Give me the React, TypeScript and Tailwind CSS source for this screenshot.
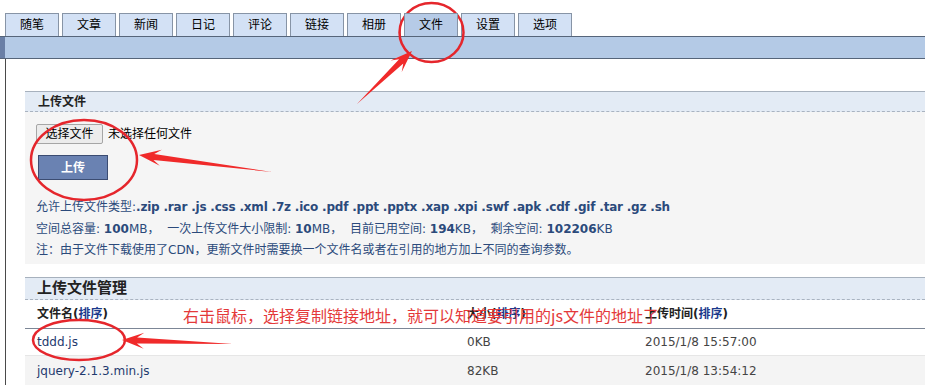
import React from "react";

const tabs = ["随笔", "文章", "新闻", "日记", "评论", "链接", "相册", "文件", "设置", "选项"];

const font = { fontFamily: '"DejaVu Sans", "Noto Sans CJK SC", sans-serif' };

// arrow outline from tail to tip, thin at the tail
function arrow(tx: number, ty: number, px: number, py: number) {
  const len = Math.hypot(px - tx, py - ty);
  const dx = (px - tx) / len;
  const dy = (py - ty) / len;
  const nx = -dy;
  const ny = dx;
  const neck = [px - 15 * dx, py - 15 * dy];
  const barb = [px - 22 * dx, py - 22 * dy];
  const pts = [
    [tx, ty],
    [neck[0] + 3 * nx, neck[1] + 3 * ny],
    [barb[0] + 8 * nx, barb[1] + 8 * ny],
    [px, py],
    [barb[0] - 8 * nx, barb[1] - 8 * ny],
    [neck[0] - 3 * nx, neck[1] - 3 * ny],
  ];
  return pts.map((p) => p.join(",")).join(" ");
}

function Sort() {
  return (
    <>
      (<span className="text-[#1c3a8c]">排序</span>)
    </>
  );
}

export default function App() {
  return (
    <div className="relative w-[925px] h-[385px] overflow-hidden bg-white text-[12px]" style={font}>
      {/* tabs */}
      <div className="flex gap-[3px] pl-[5px] pt-[13px]">
        {tabs.map((t) => (
          <div
            key={t}
            className={
              t === "文件"
                ? "w-[54px] h-[23px] flex items-center justify-center border border-b-0 border-[#8794a6] bg-[#b6cbe7] text-black relative z-10 -mb-px"
                : "w-[54px] h-[23px] flex items-center justify-center border border-b-0 border-[#8794a6] bg-[#d3e1f5] text-black"
            }
          >
            {t}
          </div>
        ))}
      </div>

      {/* blue bar */}
      <div className="flex h-[23px] border-y border-[#56657a] bg-[#b4cae6]">
        <div className="w-[5px] bg-[#6a7fa6]" />
      </div>

      {/* body */}
      <div className="ml-[5px] border-l border-[#4a4a4a] pl-[19px] pt-[32px] h-[400px]">
        {/* upload section */}
        <div className="border-t border-[#a7b1bd]">
          <div className="h-[20px] flex items-center pl-[13px] bg-[#e3ebf5] border-b border-dashed border-[#a9b3c0] font-bold text-[#222]">
            上传文件
          </div>
          <div className="bg-[#f5f5f5] h-[152px] pl-[11px] pt-[12px] text-[#2b4a7b]">
            <div className="flex items-center gap-[5px] text-black">
              <div className="w-[67px] h-[20px] flex items-center justify-center border border-[#a6a6a6] rounded-[2px] bg-[#ececec]">
                选择文件
              </div>
              <span>未选择任何文件</span>
            </div>
            <div className="mt-[11px] ml-[2px] w-[70px] h-[25px] flex items-center justify-center bg-[#6a82b2] border border-[#3b4c72] text-white font-bold">
              上传
            </div>
            <div className="mt-[17px] leading-[21.5px]">
              <div>
                允许上传文件类型:<b className="tracking-[-0.2px]">.zip .rar .js .css .xml .7z .ico .pdf .ppt .pptx .xap .xpi .swf .apk .cdf .gif .tar .gz .sh</b>
              </div>
              <div className="whitespace-pre">
                空间总容量: <b>100</b>MB，  一次上传文件大小限制: <b>10</b>MB，  目前已用空间: <b>194</b>KB，  剩余空间: <b>102206</b>KB
              </div>
              <div>注：由于文件下载使用了CDN，更新文件时需要换一个文件名或者在引用的地方加上不同的查询参数。</div>
            </div>
          </div>
        </div>

        {/* manage section */}
        <div className="mt-[13px] border-t border-[#a7b1bd]">
          <div className="h-[22px] flex items-center pl-[12px] bg-[#e3ebf5] border-b border-dashed border-[#a9b3c0] text-[15px] font-bold text-[#222]">
            上传文件管理
          </div>
          <div className="flex h-[29px] items-center border-b border-[#7c8696] font-bold text-[#222]">
            <div className="w-[442px] pl-[12px]">
              文件名<Sort />
            </div>
            <div className="w-[178px]">
              大小<Sort />
            </div>
            <div>
              上传时间<Sort />
            </div>
          </div>
          <div className="flex h-[27px] items-center border-b border-[#e6e6e6] bg-white text-[#444]">
            <div className="w-[442px] pl-[12px] text-[#1f3a6e]">tddd.js</div>
            <div className="w-[178px]">0KB</div>
            <div>2015/1/8 15:57:00</div>
          </div>
          <div className="flex h-[29px] items-center bg-[#f4f4f4] text-[#444]">
            <div className="w-[442px] pl-[12px] text-[#1f3a6e]">jquery-2.1.3.min.js</div>
            <div className="w-[178px]">82KB</div>
            <div>2015/1/8 13:54:12</div>
          </div>
        </div>
      </div>

      {/* red note */}
      <div className="absolute left-[183px] top-[304px] text-[16px] leading-[22px] text-[#e4393a] whitespace-nowrap" style={{ fontFamily: '"Noto Sans CJK SC", sans-serif' }}>
        右击鼠标，选择复制链接地址，就可以知道要引用的js文件的地址了
      </div>

      {/* annotations */}
      <svg className="absolute inset-0 pointer-events-none" width="925" height="385">
        <g fill="none" stroke="#e5262c" strokeWidth="2.5">
          <ellipse cx="431.5" cy="32.5" rx="32" ry="29.5" />
          <ellipse cx="84" cy="160" rx="53" ry="40" />
          <ellipse cx="79" cy="340" rx="46" ry="20" />
        </g>
        <g fill="#f02a2a">
          <polygon points={arrow(357, 104, 412, 51)} />
          <polygon points={arrow(272, 172, 139, 155)} />
          <polygon points={arrow(233, 344, 122, 340)} />
        </g>
      </svg>
    </div>
  );
}
